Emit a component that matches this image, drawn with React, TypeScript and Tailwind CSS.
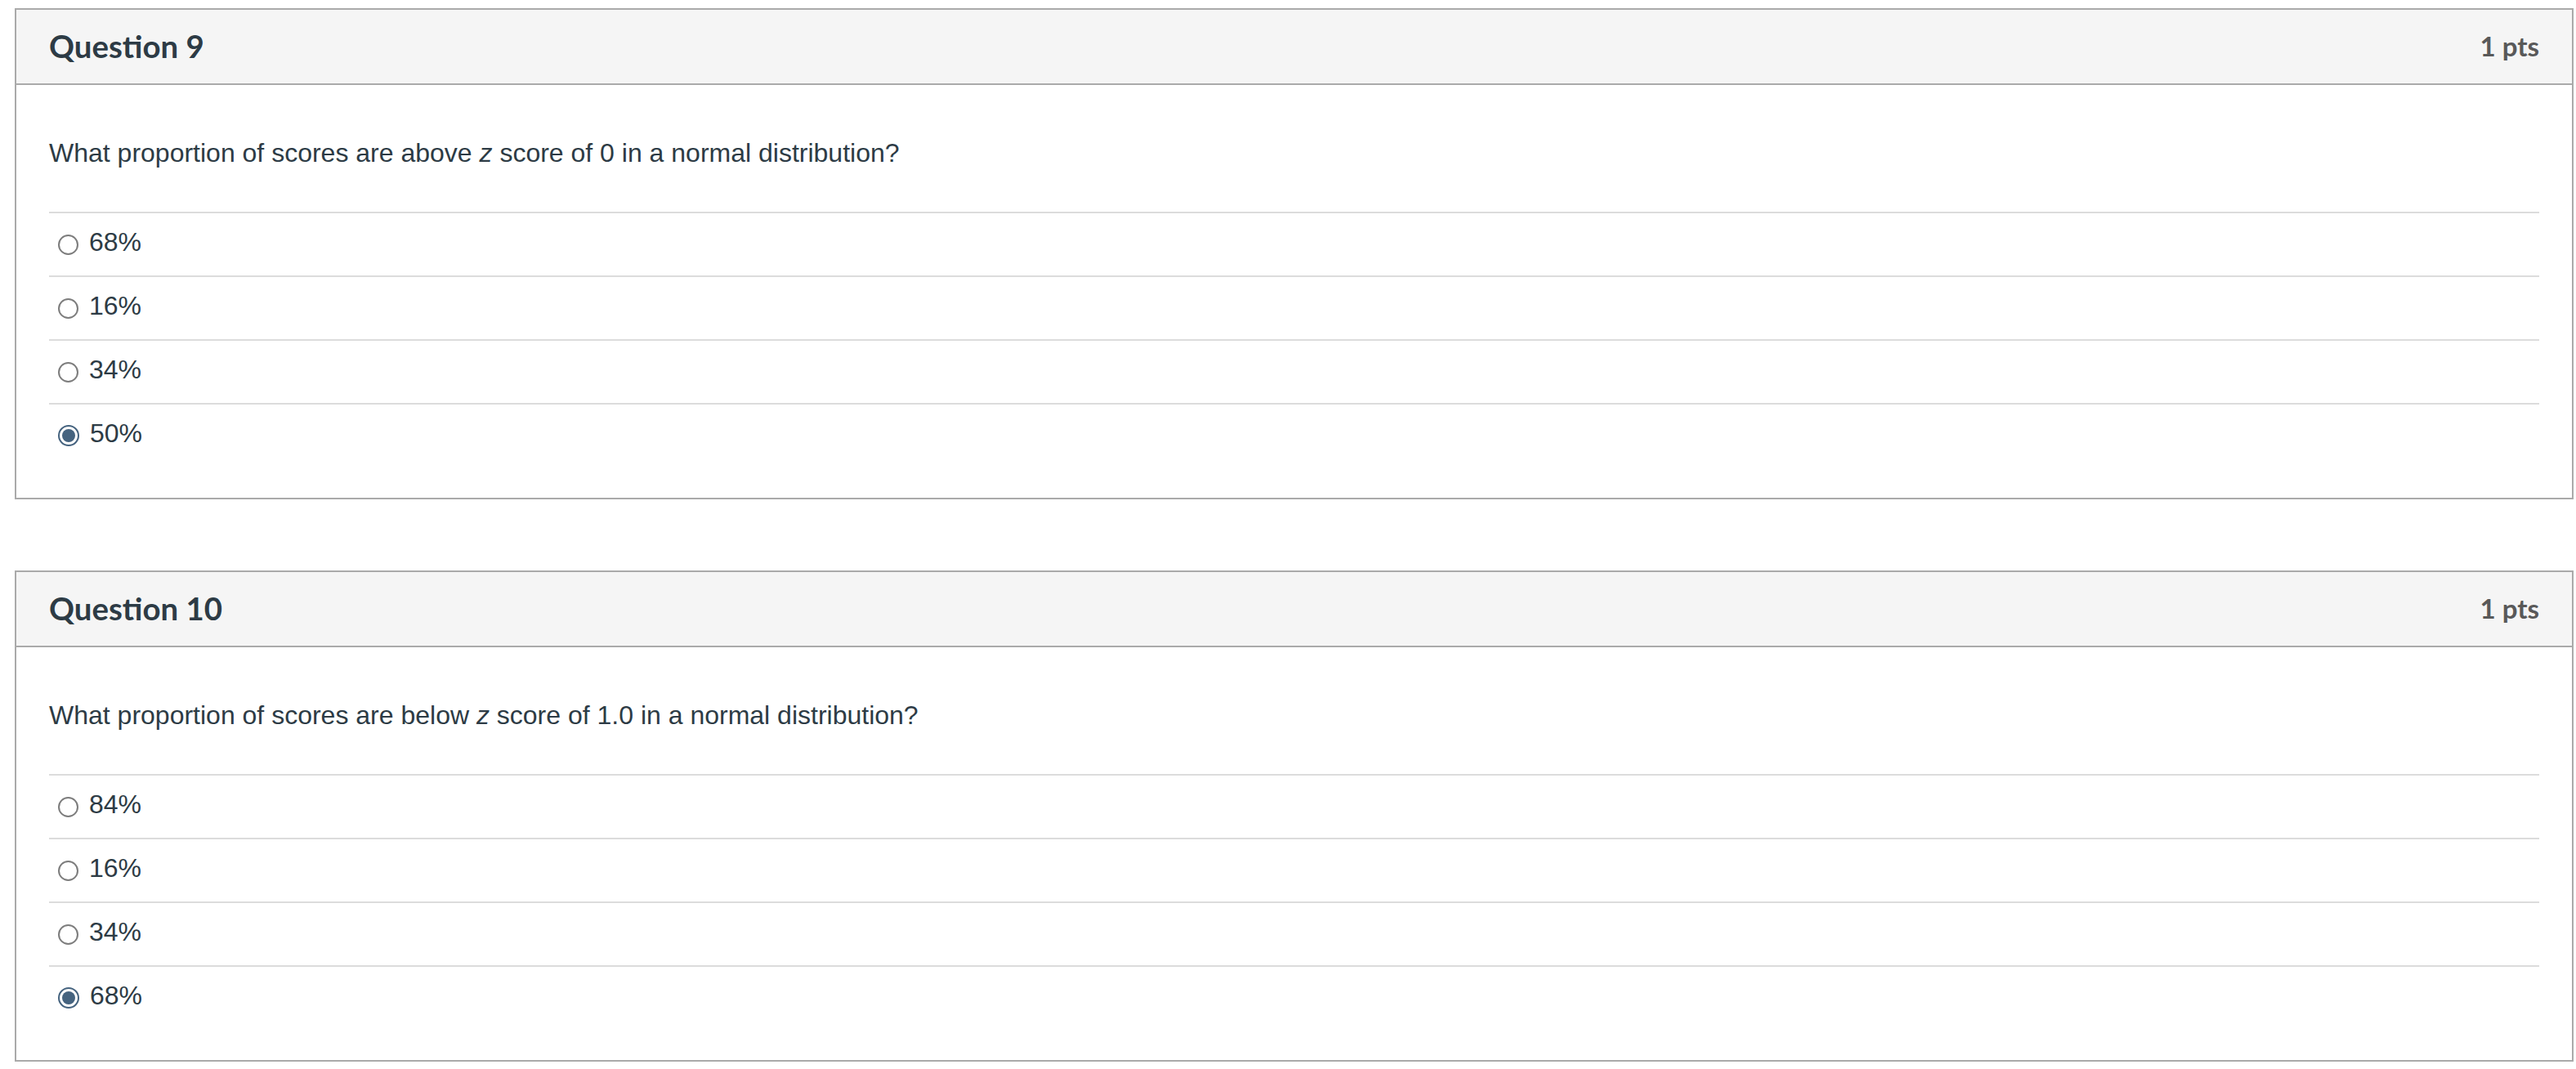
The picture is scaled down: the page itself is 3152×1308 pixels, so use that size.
import React from 'react';

type Question = {
  title: string;
  points: string;
  before: string;
  after: string;
  answers: string[];
  selected: number;
};

const questions: Question[] = [
  {
    title: 'Question 9',
    points: '1 pts',
    before: 'What proportion of scores are above ',
    after: ' score of 0 in a normal distribution?',
    answers: ['68%', '16%', '34%', '50%'],
    selected: 3,
  },
  {
    title: 'Question 10',
    points: '1 pts',
    before: 'What proportion of scores are below ',
    after: ' score of 1.0 in a normal distribution?',
    answers: ['84%', '16%', '34%', '68%'],
    selected: 3,
  },
];

function Radio({ checked }: { checked: boolean }) {
  if (checked) {
    return (
      <span className="mt-[6px] ml-[11px] flex h-[26px] w-[26px] shrink-0 items-center justify-center rounded-full border-2 border-[#45637f] bg-white">
        <span className="h-[16px] w-[16px] rounded-full bg-[#45637f]" />
      </span>
    );
  }
  return (
    <span className="mt-[6px] ml-[11px] h-[25px] w-[25px] shrink-0 rounded-full border-2 border-[#7d7d7d] bg-white" />
  );
}

function QuestionCard({ q }: { q: Question }) {
  return (
    <div className="border-2 border-[#aaaaaa] bg-white">
      {/* Header */}
      <div className="flex h-[92px] items-center justify-between border-b-2 border-[#aaaaaa] bg-[#f5f5f5] px-[40px] font-['Lato',sans-serif] font-bold">
        <h2 className="text-[38.4px] text-[#2d3b45]">{q.title}</h2>
        <span className="text-[33px] text-[#595959]">{q.points}</span>
      </div>

      {/* Body */}
      <div className="px-[40px] pt-[59px] pb-[38px] font-['Liberation_Sans',Arial,sans-serif] text-[32px] leading-[48px] text-[#2d3b45]">
        <p className="mb-[48px]">
          {q.before}
          <em>z</em>
          {q.after}
        </p>

        <div>
          {q.answers.map((a, idx) => (
            <label
              key={idx}
              className="flex h-[78px] items-center gap-[13px] border-t-2 border-[#dcdcdc] pb-[6px]"
            >
              <Radio checked={idx === q.selected} />
              <span>{a}</span>
            </label>
          ))}
        </div>
      </div>
    </div>
  );
}

export default function App() {
  return (
    <div className="min-h-screen bg-white pt-[10px] pr-[3px] pl-[18px]">
      <div className="flex flex-col gap-[87px]">
        {questions.map((q, idx) => (
          <QuestionCard key={idx} q={q} />
        ))}
      </div>
    </div>
  );
}
